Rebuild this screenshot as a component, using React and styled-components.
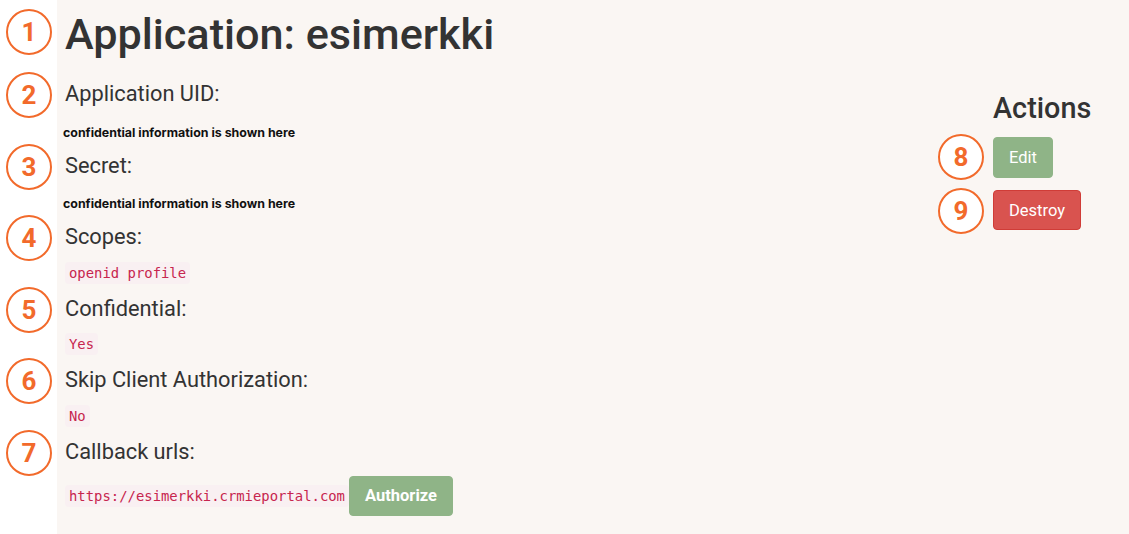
import React from "react"
import styled, { createGlobalStyle } from "styled-components"

const GlobalStyle = createGlobalStyle`
  html, body {
    margin: 0;
    padding: 0;
    background: #fff;
  }
  body {
    font-family: Roboto, "Liberation Sans", sans-serif;
    color: #333;
  }
`

const Page = styled.div`
  display: flex;
  width: 1129px;
  height: 534px;
`

const Gutter = styled.div`
  width: 57px;
  flex-shrink: 0;
  background: #fff;
`

const Panel = styled.div`
  flex: 1;
  display: flex;
  justify-content: space-between;
  background: #faf6f3;
  padding: 0 0 0 8px;
`

const Main = styled.div`
  display: flex;
  flex-direction: column;
`

const Title = styled.h1`
  position: relative;
  margin: 9px 0 20px;
  font-size: 43.2px;
  line-height: 52px;
  font-weight: 500;
  color: #333;
`

const Field = styled.div`
  position: relative;
  display: flex;
  flex-direction: column;
`

const Label = styled.h5`
  margin: 0;
  font-size: 21.8px;
  line-height: 26px;
  font-weight: 400;
  color: #333;
`

const Value = styled.div`
  display: flex;
  align-items: center;
  height: ${p => p.$height || 45.5}px;
  padding-top: ${p => p.$pad || 0}px;
  box-sizing: border-box;
`

const Secret = styled.span`
  font-family: Inter, "Liberation Sans", Arial, sans-serif;
  font-weight: 700;
  font-size: 12.4px;
  color: #111;
  margin-left: -2px;
`

const Code = styled.code`
  font-family: "DejaVu Sans Mono", "Liberation Mono", monospace;
  font-size: 13.9px;
  line-height: 22px;
  padding: 0 4px;
  color: #c7254e;
  background: #f9f0f2;
  border-radius: 4px;
`

const Marker = styled.span`
  position: absolute;
  left: ${p => p.$left || -59}px;
  top: ${p => p.$top || 0}px;
  width: 42px;
  height: 42px;
  border: 2px solid #f26a2b;
  border-radius: 50%;
  display: flex;
  align-items: center;
  justify-content: center;
  font-family: Roboto, "Open Sans", sans-serif;
  font-weight: 700;
  font-size: 26px;
  color: #f26a2b;
  background: #fff;
`

const Button = styled.button`
  font-family: Roboto, "Liberation Sans", sans-serif;
  font-size: 16.5px;
  font-weight: ${p => (p.$bold ? 700 : 400)};
  color: #fff;
  background: ${p => (p.$danger ? "#d9534f" : "#8fb487")};
  border: 1px solid ${p => (p.$danger ? "#d03c37" : "#8fb487")};
  border-radius: 4px;
  height: ${p => p.$h || 40}px;
  padding: 0 ${p => p.$px || 15}px;
  margin-left: ${p => p.$ml || 0}px;
  cursor: pointer;
`

const Side = styled.aside`
  width: 136px;
  display: flex;
  flex-direction: column;
  align-items: flex-start;
`

const SideTitle = styled.h3`
  margin: 91px 0 11px;
  font-size: 28.8px;
  line-height: 35px;
  font-weight: 500;
  color: #333;
`

const Action = styled.div`
  position: relative;
  margin-bottom: ${p => p.$mb || 0}px;
`

const fields = [
  { n: 2, label: "Application UID:", secret: true },
  { n: 3, label: "Secret:", secret: true },
  { n: 4, label: "Scopes:", code: "openid profile" },
  { n: 5, label: "Confidential:", code: "Yes" },
  { n: 6, label: "Skip Client Authorization:", code: "No" },
]

export default function App() {
  return (
    <>
      <GlobalStyle />
      <Page>
        <Gutter />
        <Panel>
          <Main>
            <Title>
              <Marker $left={-59} $top={0}>1</Marker>
              Application: esimerkki
            </Title>
            {fields.map(f => (
              <Field key={f.n}>
                <Marker $top={-9}>{f.n}</Marker>
                <Label>{f.label}</Label>
                {f.secret ? (
                  <Value $pad={5}>
                    <Secret>confidential information is shown here</Secret>
                  </Value>
                ) : (
                  <Value>
                    <Code>{f.code}</Code>
                  </Value>
                )}
              </Field>
            ))}
            <Field>
              <Marker $top={-9}>7</Marker>
              <Label>Callback urls:</Label>
              <Value $height={62} $pad={0}>
                <Code>https://esimerkki.crmieportal.com</Code>
                <Button $bold $h={40} $px={15}>Authorize</Button>
              </Value>
            </Field>
          </Main>
          <Side>
            <SideTitle>Actions</SideTitle>
            <Action $mb={12}>
              <Marker $left={-55} $top={-3}>8</Marker>
              <Button $h={41} $px={15}>Edit</Button>
            </Action>
            <Action>
              <Marker $left={-55} $top={-2}>9</Marker>
              <Button $danger $h={40} $px={15}>Destroy</Button>
            </Action>
          </Side>
        </Panel>
      </Page>
    </>
  )
}
